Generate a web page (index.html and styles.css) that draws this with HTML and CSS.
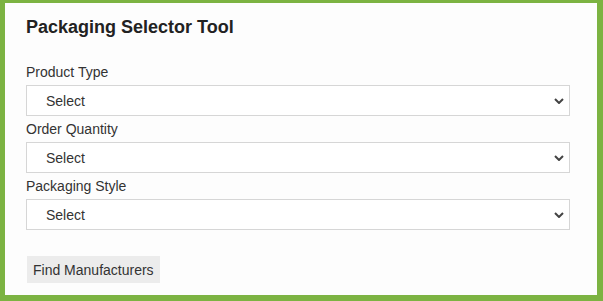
FILE: index.html
```html
<!DOCTYPE html>
<html>
  <head>
    <meta charset="UTF-8" />
    <title>Packaging Selector Tool</title>
    <link rel="stylesheet" href="styles.css">
  </head>
  <body>
    <div id="selector-tool">
      <h2 class="tool-title">Packaging Selector Tool</h2>

      <form class="tool-form">
        <label class="field-label" for="product-type">Product Type</label>
        <div class="select-wrap">
          <select id="product-type" class="field-select">
            <option>Select</option>
          </select>
          <svg class="chevron" width="10" height="6" viewBox="0 0 10 6">
            <path d="M1 1 L5 5 L9 1" fill="none" stroke="#444" stroke-width="2" />
          </svg>
        </div>

        <label class="field-label" for="order-qty">Order Quantity</label>
        <div class="select-wrap">
          <select id="order-qty" class="field-select">
            <option>Select</option>
          </select>
          <svg class="chevron" width="10" height="6" viewBox="0 0 10 6">
            <path d="M1 1 L5 5 L9 1" fill="none" stroke="#444" stroke-width="2" />
          </svg>
        </div>

        <label class="field-label" for="pack-style">Packaging Style</label>
        <div class="select-wrap">
          <select id="pack-style" class="field-select">
            <option>Select</option>
          </select>
          <svg class="chevron" width="10" height="6" viewBox="0 0 10 6">
            <path d="M1 1 L5 5 L9 1" fill="none" stroke="#444" stroke-width="2" />
          </svg>
        </div>

        <button type="button" class="find-btn">Find Manufacturers</button>
      </form>
    </div>
  </body>
</html>
```

FILE: styles.css
```css
body {
  margin: 0;
  padding: 0;
  background: #ffffff;
  font-family: "Liberation Sans", Arial, sans-serif;
  overflow: hidden;
}

#selector-tool {
  margin: -3px 0 0 -1px;
  width: 604px;
  height: 304px;
  box-sizing: border-box;
  border: 6px solid #7cb342;
  background: #fdfdfd;
  padding: 14px 27px 0 21px;
}

.tool-title {
  margin: 0 0 25px 0;
  font-size: 18px;
  line-height: 21px;
  font-weight: bold;
  color: #222;
}

.tool-form {
  display: flex;
  flex-direction: column;
  align-items: flex-start;
}

.field-label {
  font-size: 14px;
  line-height: 18px;
  color: #333;
  margin-bottom: 4px;
}

.select-wrap {
  position: relative;
  width: 100%;
  margin-bottom: 4px;
}

.field-select {
  display: block;
  width: 100%;
  height: 31px;
  -webkit-appearance: none;
  appearance: none;
  background: #fff;
  border: 1px solid #d6d6d6;
  border-radius: 0;
  padding: 0 0 0 19px;
  font-family: inherit;
  font-size: 14px;
  color: #333;
}

.chevron {
  position: absolute;
  right: 6px;
  top: 13px;
}

.find-btn {
  margin: 22px 0 0 1px;
  height: 27px;
  padding: 0 6px;
  border: none;
  background: #ececec;
  font-family: inherit;
  font-size: 14px;
  color: #333;
}
```
